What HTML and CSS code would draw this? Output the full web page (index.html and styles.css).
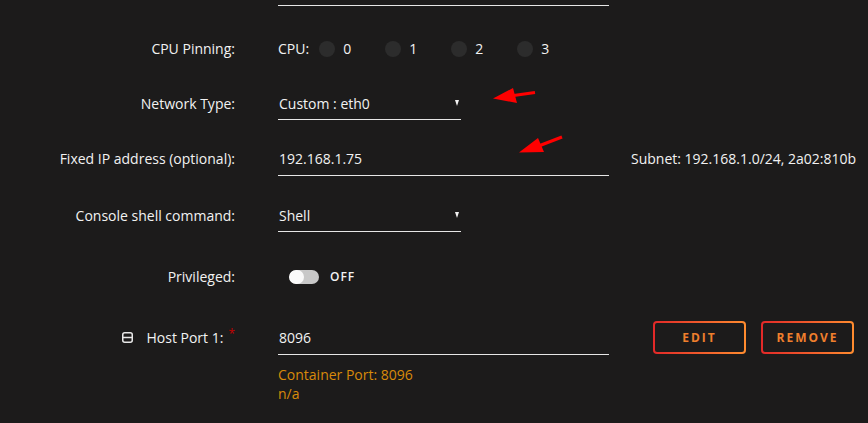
FILE: index.html
```html
<!DOCTYPE html>
<html lang="en">
    <head>
        <meta charset="UTF-8" />
        <meta name="viewport" content="width=device-width, initial-scale=1.0" />
        <title>Docker container settings</title>
        <link rel="stylesheet" href="styles.css">
    </head>
    <body>
        <form class="docker-form">
            <!-- bottom of the field above, scrolled out of view -->
            <div class="prev-field"></div>

            <div class="row">
                <div class="row-label">CPU Pinning:</div>
                <div class="row-value cpu-list">
                    <span class="cpu-title">CPU:</span>
                    <span class="cpu"><span class="cpu-dot"></span>0</span>
                    <span class="cpu"><span class="cpu-dot"></span>1</span>
                    <span class="cpu"><span class="cpu-dot"></span>2</span>
                    <span class="cpu"><span class="cpu-dot"></span>3</span>
                </div>
            </div>

            <div class="row">
                <div class="row-label">Network Type:</div>
                <div class="row-value">
                    <div class="field select">Custom : eth0<span class="caret"></span></div>
                </div>
            </div>

            <div class="row">
                <div class="row-label">Fixed IP address (optional):</div>
                <div class="row-value">
                    <div class="field">192.168.1.75</div>
                    <span class="subnet">Subnet: 192.168.1.0/24, 2a02:810b</span>
                </div>
            </div>

            <div class="row row-console">
                <div class="row-label">Console shell command:</div>
                <div class="row-value">
                    <div class="field select">Shell<span class="caret"></span></div>
                </div>
            </div>

            <div class="row row-privileged">
                <div class="row-label">Privileged:</div>
                <div class="row-value">
                    <span class="switch"><span class="switch-knob"></span></span>
                    <span class="switch-text">OFF</span>
                </div>
            </div>

            <div class="row row-host">
                <div class="row-label host-label">
                    <svg class="collapse-icon" width="11" height="11" viewBox="0 0 11 11">
                        <rect x="0.75" y="0.75" width="9.5" height="9.5" rx="2" fill="none" stroke="#e8e8e8" stroke-width="1.5" />
                        <line x1="1" y1="5.5" x2="10" y2="5.5" stroke="#e8e8e8" stroke-width="1.5" />
                    </svg>
                    <span>Host Port 1:</span>
                    <span class="required">*</span>
                </div>
                <div class="row-value">
                    <div class="field">8096</div>
                    <div class="buttons">
                        <button type="button" class="btn">EDIT</button>
                        <button type="button" class="btn">REMOVE</button>
                    </div>
                </div>
            </div>

            <div class="row-help">
                <div class="help">Container Port: 8096<br />n/a</div>
            </div>
        </form>

        <!-- red annotation arrows drawn on top of the screenshot -->
        <svg class="annotations" width="868" height="423" viewBox="0 0 868 423">
            <line x1="535" y1="92.5" x2="510" y2="96" stroke="#ff0000" stroke-width="3.2" />
            <polygon points="493,98.5 513,88 517,103" fill="#ff0000" />
            <line x1="562" y1="137" x2="536" y2="147" stroke="#ff0000" stroke-width="3.2" />
            <polygon points="519,152.5 538,138 544,152" fill="#ff0000" />
        </svg>
    </body>
</html>
```

FILE: styles.css
```css
body {
    margin: 0;
    padding: 0;
    position: relative;
    height: 423px;
    overflow: hidden;
    background-color: #1c1b1b;
    color: #f2f2f2;
    font-family: "Open Sans", "Noto Sans", sans-serif;
    font-size: 14px;
}

.docker-form {
    width: 868px;
}

.prev-field {
    margin-left: 278px;
    width: 331px;
    height: 5px;
    border-bottom: 1px solid #e6e6e6;
    margin-bottom: 15px;
}

.row {
    display: grid;
    grid-template-columns: 235px 1fr;
    column-gap: 43px;
    align-items: center;
    height: 55px;
}

.row-console {
    height: 59px;
}

.row-privileged {
    height: 63px;
}

.row-host {
    height: 59px;
}

.row-label {
    text-align: right;
    white-space: nowrap;
}

.row-value {
    display: flex;
    align-items: center;
    white-space: nowrap;
}

/* inputs */
.field {
    box-sizing: border-box;
    width: 331px;
    height: 34px;
    padding-left: 1px;
    display: flex;
    align-items: center;
    border-bottom: 1px solid #e6e6e6;
    position: relative;
}

.field.select {
    width: 183px;
    height: 32px;
}

.caret {
    position: absolute;
    right: 2px;
    top: 12px;
    width: 0;
    height: 0;
    border-left: 2.5px solid transparent;
    border-right: 2.5px solid transparent;
    border-top: 6px solid #f2f2f2;
}

.subnet {
    margin-left: 22px;
}

/* cpu pinning */
.cpu-title {
    margin-right: 10px;
}

.cpu {
    display: flex;
    align-items: center;
    width: 66px;
}

.cpu-dot {
    width: 16px;
    height: 16px;
    border-radius: 50%;
    background-color: #2c2c2c;
    margin-right: 8px;
}

/* privileged switch */
.switch {
    box-sizing: border-box;
    margin-left: 11px;
    width: 30px;
    height: 14px;
    border-radius: 7px;
    background-color: #c8c8c8;
    display: flex;
    overflow: hidden;
}

.switch-knob {
    width: 15px;
    height: 14px;
    border-radius: 7px;
    background-color: #fafafa;
}

.switch-text {
    margin-left: 11px;
    font-size: 12px;
    font-weight: 600;
    letter-spacing: 1px;
}

/* host port */
.host-label {
    display: flex;
    justify-content: flex-end;
    align-items: center;
}

.collapse-icon {
    margin-right: 13px;
}

.required {
    color: #c40000;
    font-size: 12px;
    margin-left: 5px;
    align-self: flex-start;
    margin-top: -3px;
}

.buttons {
    display: flex;
    gap: 15px;
    margin-left: 44px;
}

.btn {
    box-sizing: border-box;
    width: 93px;
    height: 33px;
    border: 2px solid transparent;
    border-radius: 4px;
    background: linear-gradient(#1c1b1b, #1c1b1b) padding-box,
        linear-gradient(90deg, #e22828, #ff8c2f) border-box;
    color: #ef7f2d;
    font-family: "Open Sans", "Noto Sans", sans-serif;
    font-size: 12px;
    font-weight: 700;
    letter-spacing: 2px;
    padding: 0;
    cursor: pointer;
}

.row-help {
    display: grid;
    grid-template-columns: 235px 1fr;
    column-gap: 43px;
    margin-top: -2px;
}

.help {
    grid-column: 2;
    color: #d88a0a;
    line-height: 19px;
}

.annotations {
    position: absolute;
    top: 0;
    left: 0;
    pointer-events: none;
}
```
